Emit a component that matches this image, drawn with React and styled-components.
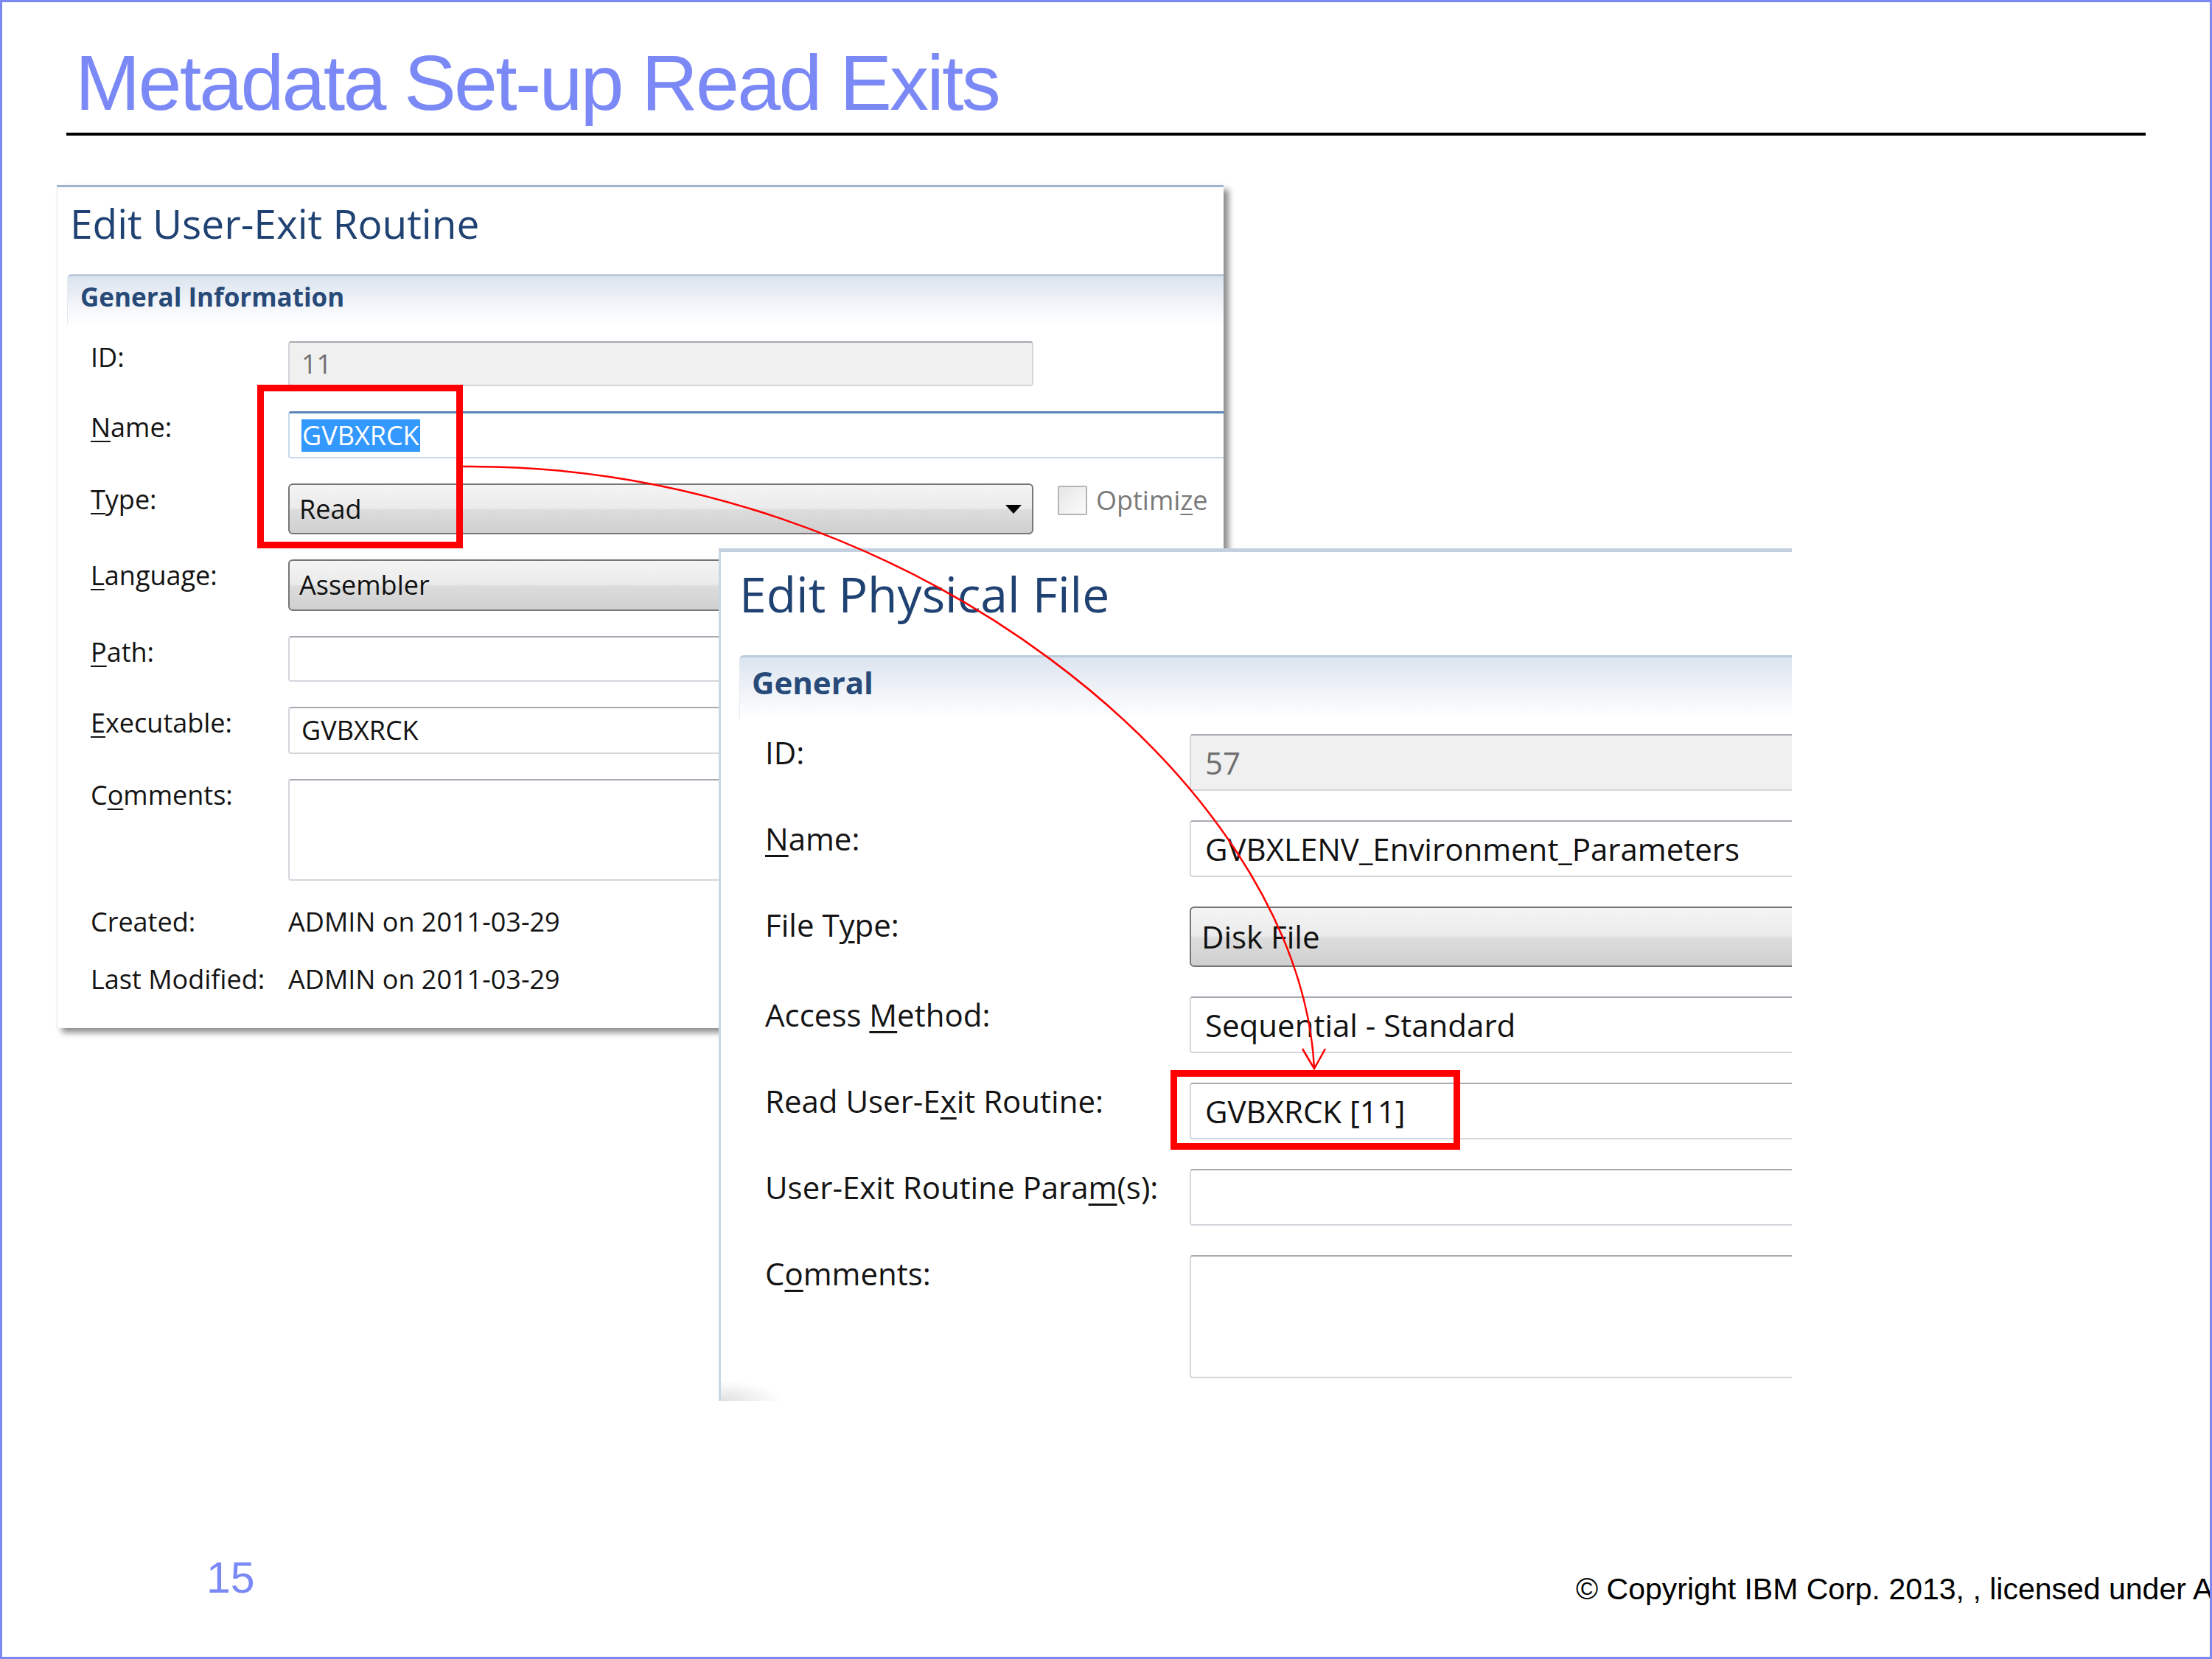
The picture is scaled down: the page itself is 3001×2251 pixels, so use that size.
import React from 'react';
import styled, { createGlobalStyle, ThemeProvider } from 'styled-components';

const GlobalStyle = createGlobalStyle`
  html, body {
    margin: 0;
    padding: 0;
    background: #fff;
  }
  body {
    font-family: "Open Sans", "Liberation Sans", sans-serif;
  }
`;

// metrics of the two pasted dialogs (they were captured at different zooms)
const routineTheme = {
  font: 36, line: 44, gap: 34,
  labelWidth: 268, gridLeft: 45, gridTop: 23, padBottom: 44,
  title: 55, titleLine: 66, titleTop: 16, titleIndent: 17,
  header: 35, headerLine: 42, headerTop: 36, headerIndent: 13,
  headerPad: 17, headerPadTop: 7, headerHeight: 68,
  inputPad: 16, comboPad: 13,
};

const fileTheme = {
  font: 42, line: 50, gap: 40,
  labelWidth: 576, gridLeft: 60, gridTop: 20, padBottom: 31,
  title: 66, titleLine: 76, titleTop: 18, titleIndent: 25,
  header: 42, headerLine: 50, headerTop: 46, headerIndent: 25,
  headerPad: 16, headerPadTop: 9, headerHeight: 87,
  inputPad: 19, comboPad: 14,
};

const Slide = styled.div`
  position: relative;
  width: 3001px;
  height: 2251px;
  box-sizing: border-box;
  border: 3px solid #7c89f4;
  background: #fff;
  overflow: hidden;
  display: flex;
  flex-direction: column;
`;

const Heading = styled.h1`
  margin: 49px 0 0 99px;
  font-family: "Liberation Sans", Arial, sans-serif;
  font-weight: 400;
  font-size: 106px;
  line-height: 120px;
  letter-spacing: -2.8px;
  color: #7b89f6;
  white-space: nowrap;
`;

const Rule = styled.hr`
  margin: 8px 0 0 87px;
  width: 2821px;
  height: 4px;
  border: 0;
  background: #000;
`;

const Stage = styled.div`
  position: relative;
  margin-top: 67px;
  height: 1650px;
`;

const Window = styled.section`
  box-sizing: border-box;
  background: #fff;
  font-family: "Open Sans", "Noto Sans", sans-serif;
  padding: ${p => p.theme.titleTop}px 0 ${p => p.theme.padBottom}px;
  overflow: hidden;
`;

const RoutineWindow = styled(Window)`
  width: 1583px;
  margin-left: 74px;
  border-top: 3px solid #9db4d0;
  border-left: 1px solid #e2e2e2;
  box-shadow: 7px 6px 8px rgba(0, 0, 0, 0.45);
`;

const FileWindow = styled(Window)`
  position: absolute;
  left: 972px;
  top: 493px;
  width: 1456px;
  border-top: 5px solid #c3d0df;
  border-left: 3px solid #cad6e4;
  background:
    radial-gradient(ellipse 120px 40px at 0 100%, rgba(0, 0, 0, 0.12), rgba(0, 0, 0, 0) 70%),
    #fff;
`;

const WindowTitle = styled.h2`
  margin: 0 0 0 ${p => p.theme.titleIndent}px;
  font-weight: 400;
  font-size: ${p => p.theme.title}px;
  line-height: ${p => p.theme.titleLine}px;
  color: #1f4272;
  white-space: nowrap;
`;

const SectionBar = styled.div`
  box-sizing: border-box;
  margin: ${p => p.theme.headerTop}px 0 0 ${p => p.theme.headerIndent}px;
  height: ${p => p.theme.headerHeight}px;
  padding: ${p => p.theme.headerPadTop}px 0 0 ${p => p.theme.headerPad}px;
  border-top: 3px solid #bccbdc;
  border-left: 1px solid #e3e9f0;
  border-top-left-radius: 6px;
  background: linear-gradient(to bottom, #dbe4ef 0%, #edf1f7 45%, #ffffff 100%);
  font-weight: 700;
  font-size: ${p => p.theme.header}px;
  line-height: ${p => p.theme.headerLine}px;
  color: #284a78;
  white-space: nowrap;
`;

const Form = styled.div`
  display: grid;
  grid-template-columns: ${p => p.theme.labelWidth}px 1fr;
  row-gap: ${p => p.theme.gap}px;
  margin-top: ${p => p.theme.gridTop}px;
  padding-left: ${p => p.theme.gridLeft}px;
  font-size: ${p => p.theme.font}px;
  line-height: ${p => p.theme.line}px;
  color: #141414;
`;

const Label = styled.div`
  align-self: start;
  white-space: nowrap;
`;

const Key = styled.span`
  text-decoration: underline;
  text-underline-offset: 0.14em;
  text-decoration-thickness: 0.06em;
`;

const Cell = styled.div`
  display: flex;
  align-items: center;
  gap: 33px;
  min-width: 0;
  margin-right: ${p => (p.$open ? '-24px' : '0')};
`;

const Value = styled.div`
  white-space: nowrap;
`;

const TextBox = styled.div`
  box-sizing: border-box;
  flex: ${p => (p.$w ? `0 0 ${p.$w}px` : '1 1 auto')};
  height: ${p => p.$h}px;
  display: flex;
  align-items: center;
  padding-left: ${p => p.theme.inputPad}px;
  border: 2px solid #d3d6db;
  border-top-color: #a7aab0;
  border-radius: 4px;
  background: ${p => (p.$readOnly ? '#f0f0f0' : '#fff')};
  color: ${p => (p.$readOnly ? '#6f6f6f' : '#111')};
  white-space: nowrap;
`;

const FocusBox = styled(TextBox)`
  border-color: #c6d9ec;
  border-top: 3px solid #5a84b4;
`;

const Memo = styled(TextBox)`
  align-items: flex-start;
`;

const Selected = styled.span`
  background: #3399ff;
  color: #fff;
  padding: 0 1px;
`;

const Combo = styled.div`
  box-sizing: border-box;
  flex: ${p => (p.$w ? `0 0 ${p.$w}px` : '1 1 auto')};
  height: ${p => p.$h}px;
  display: flex;
  align-items: center;
  justify-content: space-between;
  padding: 0 14px 0 ${p => p.theme.comboPad}px;
  border: 2px solid #767676;
  border-radius: 6px;
  background: linear-gradient(#f4f4f4 0%, #ebebeb 48%, #dddddd 52%, #cfcfcf 100%);
  color: #111;
  white-space: nowrap;
`;

const DropArrow = styled.span`
  width: 0;
  height: 0;
  border-left: 11px solid transparent;
  border-right: 11px solid transparent;
  border-top: 12px solid #000;
`;

const Check = styled.label`
  align-self: flex-start;
  margin-top: 1px;
  height: 44px;
  display: flex;
  align-items: center;
  gap: 12px;
  color: #7a7a7a;
  white-space: nowrap;
`;

const CheckSquare = styled.span`
  box-sizing: border-box;
  width: 40px;
  height: 40px;
  border: 2px solid #b5b5b5;
  border-radius: 2px;
  background: linear-gradient(135deg, #e6e6e6, #fbfbfb);
`;

const Footer = styled.footer`
  display: grid;
  grid-template-columns: 1858px max-content;
  margin-top: 211px;
  padding-left: 277px;
  font-family: "Liberation Sans", Arial, sans-serif;
  white-space: nowrap;
`;

const PageNumber = styled.div`
  font-size: 59px;
  line-height: 58px;
  color: #7b89f6;
`;

const Copyright = styled.div`
  margin-top: 23px;
  font-size: 41px;
  line-height: 42px;
  color: #000;
`;

const Callout = styled.div`
  position: absolute;
  left: ${p => p.$x}px;
  top: ${p => p.$y}px;
  width: ${p => p.$w}px;
  height: ${p => p.$h}px;
  box-sizing: border-box;
  border: 9px solid #ff0000;
  pointer-events: none;
`;

const Overlay = styled.svg`
  position: absolute;
  left: 0;
  top: 0;
  pointer-events: none;
`;

function RoutineDialog() {
  return (
    <ThemeProvider theme={routineTheme}>
      <RoutineWindow>
        <WindowTitle>Edit User-Exit Routine</WindowTitle>
        <SectionBar>General Information</SectionBar>
        <Form>
          <Label>ID:</Label>
          <Cell>
            <TextBox $w={1011} $h={61} $readOnly>11</TextBox>
          </Cell>

          <Label><Key>N</Key>ame:</Label>
          <Cell $open>
            <FocusBox $h={64}><Selected>GVBXRCK</Selected></FocusBox>
          </Cell>

          <Label><Key>T</Key>ype:</Label>
          <Cell>
            <Combo $w={1011} $h={69}>
              <span>Read</span>
              <DropArrow />
            </Combo>
            <Check>
              <CheckSquare />
              <span>Optimi<Key>z</Key>e</span>
            </Check>
          </Cell>

          <Label><Key>L</Key>anguage:</Label>
          <Cell>
            <Combo $w={1011} $h={70}>
              <span>Assembler</span>
              <DropArrow />
            </Combo>
          </Cell>

          <Label><Key>P</Key>ath:</Label>
          <Cell $open>
            <TextBox $h={62} />
          </Cell>

          <Label><Key>E</Key>xecutable:</Label>
          <Cell $open>
            <TextBox $h={64}>GVBXRCK</TextBox>
          </Cell>

          <Label>C<Key>o</Key>mments:</Label>
          <Cell $open>
            <Memo $h={138} />
          </Cell>

          <Label>Created:</Label>
          <Value>ADMIN on 2011-03-29</Value>

          <Label>Last Modified:</Label>
          <Value>ADMIN on 2011-03-29</Value>
        </Form>
      </RoutineWindow>
    </ThemeProvider>
  );
}

function PhysicalFileDialog() {
  return (
    <ThemeProvider theme={fileTheme}>
      <FileWindow>
        <WindowTitle>Edit Physical File</WindowTitle>
        <SectionBar>General</SectionBar>
        <Form>
          <Label>ID:</Label>
          <Cell $open>
            <TextBox $h={77} $readOnly>57</TextBox>
          </Cell>

          <Label><Key>N</Key>ame:</Label>
          <Cell $open>
            <TextBox $h={77}>GVBXLENV_Environment_Parameters</TextBox>
          </Cell>

          <Label>File T<Key>y</Key>pe:</Label>
          <Cell $open>
            <Combo $h={82}><span>Disk File</span></Combo>
          </Cell>

          <Label>Access <Key>M</Key>ethod:</Label>
          <Cell $open>
            <TextBox $h={77}>Sequential - Standard</TextBox>
          </Cell>

          <Label>Read User-E<Key>x</Key>it Routine:</Label>
          <Cell $open>
            <TextBox $h={77}>GVBXRCK [11]</TextBox>
          </Cell>

          <Label>User-Exit Routine Para<Key>m</Key>(s):</Label>
          <Cell $open>
            <TextBox $h={77} />
          </Cell>

          <Label>C<Key>o</Key>mments:</Label>
          <Cell $open>
            <Memo $h={167} />
          </Cell>
        </Form>
      </FileWindow>
    </ThemeProvider>
  );
}

export default function App() {
  return (
    <>
      <GlobalStyle />
      <Slide>
        <Heading>Metadata Set-up Read Exits</Heading>
        <Rule />
        <Stage>
          <RoutineDialog />
          <PhysicalFileDialog />
        </Stage>
        <Footer>
          <PageNumber>15</PageNumber>
          <Copyright>© Copyright IBM Corp. 2013, , licensed under Apache License, Version 2.0</Copyright>
        </Footer>

        <Callout $x={346} $y={519} $w={279} $h={222} />
        <Callout $x={1585} $y={1449} $w={393} $h={108} />
        <Overlay width="2995" height="2245" viewBox="0 0 2995 2245">
          <path
            d="M 625 630 C 1230 625, 1760 1060, 1780 1446"
            fill="none"
            stroke="#ff0000"
            strokeWidth="2.5"
          />
          <path
            d="M 1764 1420 L 1780 1447 L 1795 1420"
            fill="none"
            stroke="#ff0000"
            strokeWidth="2.5"
          />
        </Overlay>
      </Slide>
    </>
  );
}
